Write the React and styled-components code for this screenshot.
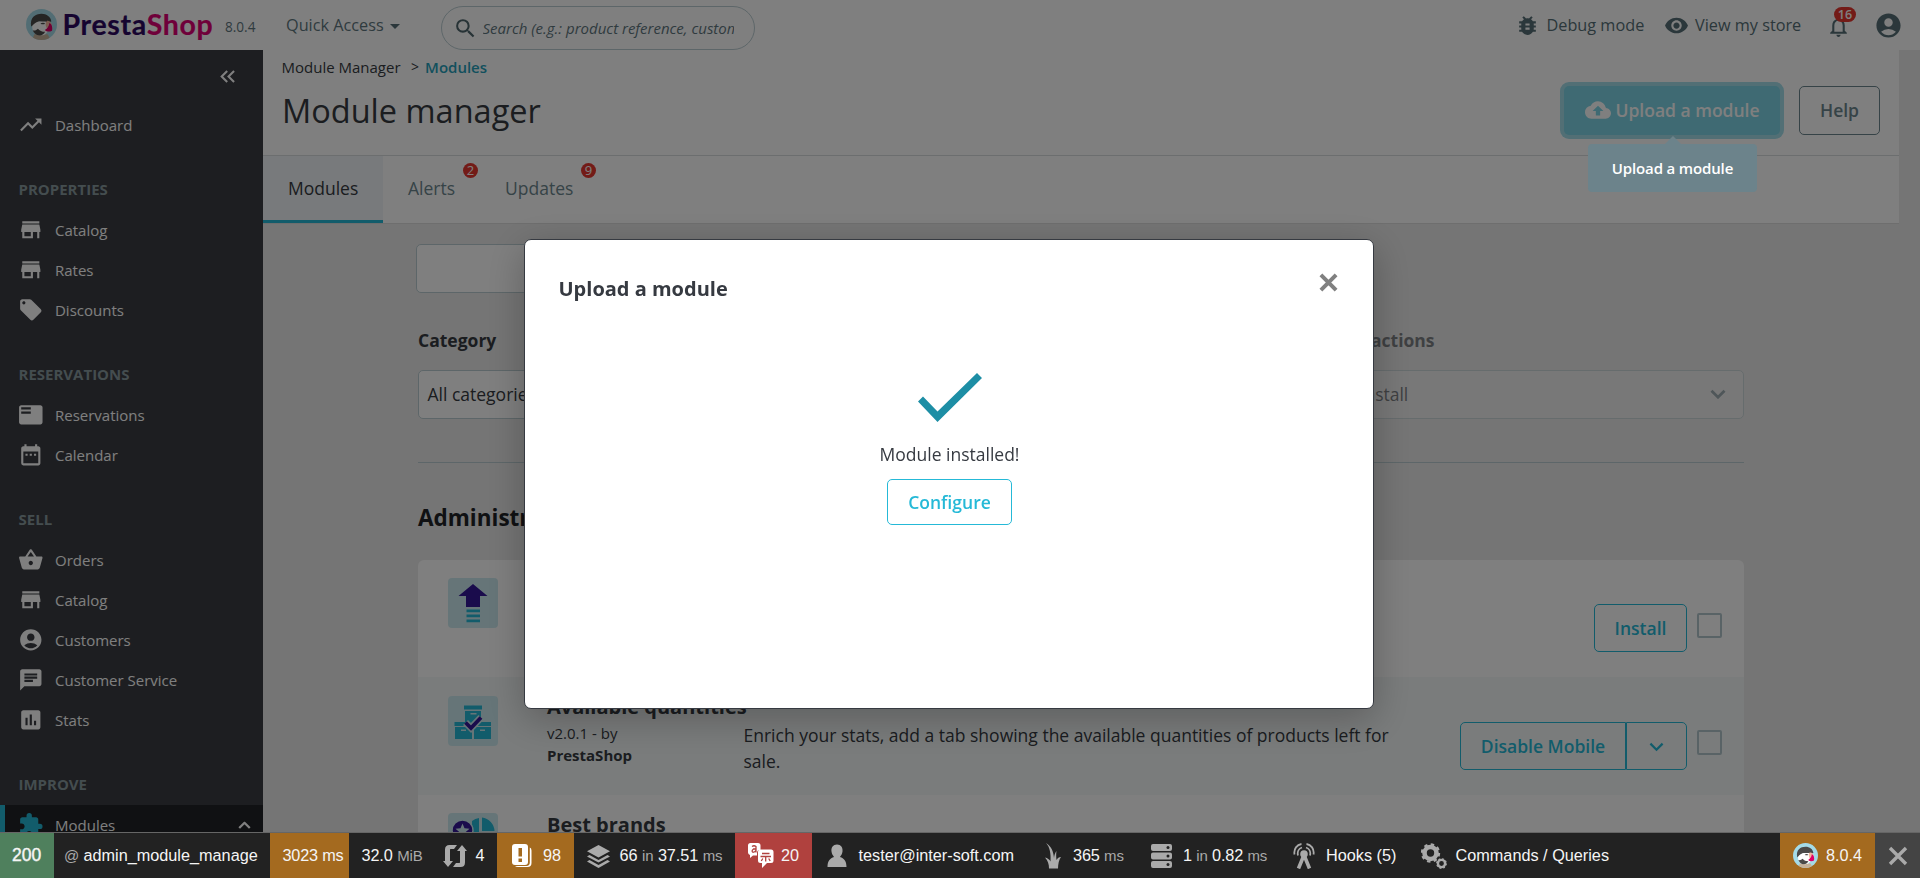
import React from "react";
import styled, { createGlobalStyle, css } from "styled-components";
import {
  MdTrendingUp, MdStore, MdLocalOffer, MdFeaturedPlayList, MdDateRange, MdShoppingBasket,
  MdAccountCircle, MdChat, MdAssessment, MdExtension,
  MdCloudUpload, MdBugReport, MdRemoveRedEye, MdNotificationsNone, MdSearch, MdKeyboardDoubleArrowLeft,
} from "react-icons/md";

const Global = createGlobalStyle`
  *, *::before, *::after { box-sizing: border-box; }
  html, body { margin: 0; height: 100%; overflow: hidden; }
  body { background: #eaeaea; font-family: "Open Sans", "Noto Sans", sans-serif; color: #363a41; font-size: 17.5px; }
  svg { display: block; flex: none; }
  button { font-family: inherit; margin: 0; }
`;

const Screen = styled.div`
  display: flex;
  flex-direction: column;
  width: 1920px;
  height: 878px;
  overflow: hidden;
`;

/* ---------- top bar ---------- */
const TopBar = styled.header`
  flex: none;
  display: flex;
  align-items: flex-start;
  height: 50px;
  padding-left: 26px;
  background: #fff;
  color: #5f777f;
`;
const Brand = styled.div`
  display: flex;
  align-items: center;
  width: 199px;
  height: 49px;
`;
const BrandName = styled.span`
  margin: -2px 0 0 5.5px;
  font: 700 28.5px/32px Lato, sans-serif;
  letter-spacing: 0.65px;
  color: #2c0860;
  -webkit-text-stroke: 0.2px currentColor;
  span { color: #df0074; }
`;
const Version = styled.span`
  width: 61px;
  padding-top: 17px;
  font-size: 13.6px;
  line-height: 20px;
`;
const QuickAccess = styled.div`
  display: flex;
  align-items: center;
  width: 155px;
  padding-top: 13px;
  font-size: 16.25px;
  line-height: 24px;
  &::after {
    content: "";
    margin: 3px 0 0 6px;
    border: 5px solid transparent;
    border-top-color: #566f76;
    border-bottom: 0;
  }
`;
const SearchBox = styled.div`
  display: flex;
  align-items: center;
  width: 314px;
  height: 44px;
  margin-top: 6px;
  padding: 0 20px 0 11px;
  border: 1px solid #bbcdd2;
  border-radius: 22px;
  svg { color: #4f666d; margin-right: 4.5px; }
`;
const Placeholder = styled.span`
  width: 251px;
  overflow: hidden;
  white-space: nowrap;
  font-size: 15px;
  font-style: italic;
`;
const TopActions = styled.div`
  display: flex;
  align-items: center;
  height: 50px;
  margin-left: auto;
  color: #566f76;
  font-size: 16.25px;
`;
const TopLink = styled.span`
  display: flex;
  align-items: center;
  gap: ${(p) => p.$gap}px;
  width: ${(p) => p.$w}px;
  white-space: nowrap;
`;
const Bell = styled.span`
  position: relative;
  width: 47.5px;
  padding-top: 2px;
`;
const BellBadge = styled.span`
  position: absolute;
  left: 8px;
  top: -5px;
  width: 22px;
  height: 15px;
  border-radius: 8px;
  background: #e6372f;
  color: #fff;
  font-size: 12.5px;
  font-weight: 600;
  line-height: 15px;
  text-align: center;
`;

/* ---------- sidebar ---------- */
const Body = styled.div`
  flex: 1;
  display: flex;
  min-height: 0;
`;
const Sidebar = styled.nav`
  flex: none;
  width: 263px;
  background: #3a3c42;
  color: #fff;
  overflow: hidden;
`;
const Collapse = styled.div`
  display: flex;
  justify-content: flex-end;
  align-items: center;
  height: 55px;
  padding: 0 23px 3px 0;
`;
const NavTitle = styled.div`
  height: 65px;
  padding: 31.5px 0 0 18.5px;
  font-size: 15px;
  font-weight: 700;
  line-height: 24px;
  color: #889a9f;
`;
const NavItem = styled.a`
  display: flex;
  align-items: center;
  height: 40px;
  padding: 0 12px 0 ${(p) => (p.$active ? 13 : 18)}px;
  font-size: 15px;
  span { flex: 1; margin-left: 11.4px; }
  ${(p) => p.$active && css`
    background: #202226;
    border-left: 5px solid #25b9d7;
    svg:first-child { color: #25b9d7; }
    svg:last-child { transform: rotate(180deg); }
  `}
`;

/* ---------- page header ---------- */
const Main = styled.main`
  flex: 1;
  min-width: 0;
  overflow: hidden;
`;
const PageHead = styled.div`
  width: 1636px;
  height: 174px;
  background: #fff;
  border-bottom: 1px solid #dcdcdc;
`;
const HeadTop = styled.div`
  display: flex;
  justify-content: space-between;
  height: 106px;
  padding: 0 19px;
  border-bottom: 1px solid #d8dcde;
`;
const Crumbs = styled.div`
  display: flex;
  margin-left: -0.5px;
  padding-top: 6px;
  font-size: 15px;
  line-height: 22px;
  b { font-weight: 600; color: #25a0ba; }
  i { margin: 0 6px 0 10.5px; font-style: normal; font-size: 14px; }
`;
const Title = styled.h1`
  margin: 9px 0 0;
  font-size: 32.5px;
  line-height: 48px;
  font-weight: 400;
`;
const HeadButtons = styled.div`
  display: flex;
  gap: 19px;
  padding-top: 36px;
`;
const Button = styled.button`
  display: flex;
  align-items: center;
  justify-content: center;
  gap: 4px;
  width: ${(p) => p.$w}px;
  height: ${(p) => p.$h || 48}px;
  padding: 0;
  border: 1px solid ${(p) => p.$color || "#25b9d7"};
  border-radius: 5px;
  background: transparent;
  color: ${(p) => p.$color || "#25b9d7"};
  font-size: 17.5px;
  font-weight: 600;
  white-space: nowrap;
`;
const PrimaryButton = styled(Button)`
  padding: 0 0 1px 1px;
  border: 0;
  background: #7ed5e6;
  color: #fff;
  box-shadow: 0 0 0 4px #a5dfeb;
`;
const HelpButton = styled(Button)`
  padding-bottom: 1px;
`;
const Tabs = styled.div`
  display: flex;
  height: 67px;
`;
const Tab = styled.div`
  position: relative;
  width: ${(p) => p.$w}px;
  padding: 0 25px;
  line-height: 65px;
  color: ${(p) => (p.$active ? "#363a41" : "#6c868e")};
  ${(p) => p.$active && css`
    background: #f0f4f8;
    box-shadow: inset 0 -3px 0 #25b9d7;
  `}
`;
const TabBadge = styled.span`
  position: absolute;
  right: 2px;
  top: 7px;
  width: 15px;
  height: 15px;
  border-radius: 50%;
  background: #e6372f;
  color: #fff;
  font-size: 13px;
  line-height: 15px;
  text-align: center;
`;

/* ---------- module list ---------- */
const Content = styled.div`
  width: 1328px;
  margin-left: 153px;
  padding: 20px 0 0 2px;
`;
const ModuleSearch = styled.div`
  width: 800px;
  height: 49px;
  margin-left: -2px;
  background: #fff;
  border: 1px solid #bbcdd2;
  border-radius: 5px;
`;
const Filters = styled.div`
  display: grid;
  grid-template-columns: repeat(3, 417px);
  justify-content: space-between;
  margin-top: 34px;
  padding-bottom: 43px;
  border-bottom: 1px solid #bbcdd2;
`;
const Filter = styled.div`
  opacity: ${(p) => (p.$disabled ? 0.6 : 1)};
`;
const FilterLabel = styled.div`
  line-height: 26px;
  font-weight: 700;
`;
const Select = styled.div`
  display: flex;
  align-items: center;
  justify-content: space-between;
  height: 49px;
  margin-top: 17px;
  padding: 0 17px 1px 8.5px;
  background: #fff;
  border: 1px solid #bbcdd2;
  border-radius: 5px;
  svg { color: #6c868e; }
  ${Filter}:last-child & { background: #f6f6f6; }
`;
const GroupTitle = styled.h2`
  margin: 38px 0 0;
  height: 59px;
  font-size: 22.5px;
  font-weight: 700;
  line-height: 34px;
  color: #202226;
`;
const List = styled.div`
  width: 1326px;
  border-radius: 6px 6px 0 0;
  overflow: hidden;
`;
const Row = styled.div`
  display: flex;
  height: ${(p) => p.$h}px;
  padding: 0 22px 0 30px;
  background: ${(p) => (p.$alt ? "#f5f9f9" : "#fff")};
`;
const Thumb = styled.div`
  width: 50px;
  height: 50px;
  margin-top: ${(p) => p.$top || 18}px;
  border-radius: 4px;
  overflow: hidden;
  background: #cdebf0;
`;
const RowText = styled.div`
  display: grid;
  grid-template-columns: 196.5px 679.5px;
  align-content: start;
  width: 876px;
  margin-left: 49px;
  padding-top: 16px;
`;
const ModuleName = styled.div`
  grid-column: 1 / -1;
  height: 28px;
  font-size: 20px;
  font-weight: 700;
  line-height: 28px;
`;
const Meta = styled.div`
  font-size: 15px;
  line-height: 22px;
  padding-top: 1px;
  b { display: block; font-weight: 700; }
`;
const Description = styled.div`
  padding-top: 1px;
  font-size: 17.5px;
  line-height: 26px;
`;
const RowActions = styled.div`
  display: flex;
  justify-content: flex-end;
  flex: 1;
  padding-top: ${(p) => p.$top}px;
  gap: 10px;
`;
const Split = styled.div`
  display: flex;
  button:first-child { border-radius: 5px 0 0 5px; }
  button:last-child { border-radius: 0 5px 5px 0; padding-top: 2px; }
`;
const Checkbox = styled.span`
  width: 25px;
  height: 25px;
  margin-top: ${(p) => p.$top || 8}px;
  border: 2px solid #b3c7cd;
  border-radius: 2px;
`;

/* ---------- overlay ---------- */
const Backdrop = styled.div`
  position: fixed;
  inset: 0;
  display: flex;
  justify-content: center;
  align-items: flex-start;
  padding: 239px 22px 0 0;
  background: rgba(0, 0, 0, 0.5);
`;
const Dialog = styled.div`
  width: 850px;
  height: 470px;
  background: #fff;
  border: 1px solid #363a41;
  border-radius: 7px;
  box-shadow: 0 10px 38px rgba(0, 0, 0, 0.25);
`;
const DialogHead = styled.div`
  display: flex;
  justify-content: space-between;
  height: 133px;
  padding: 34px 35.5px 0 33.5px;
  font-size: 20px;
  font-weight: 700;
  line-height: 30px;
  svg { margin-top: -1px; }
`;
const DialogBody = styled.div`
  display: flex;
  flex-direction: column;
  align-items: center;
  padding-left: 1px;
  svg { margin-left: 1px; }
  span { margin: 18px 0 12px; line-height: 26px; }
`;
const Tooltip = styled.div`
  position: fixed;
  left: 1588px;
  top: 144px;
  width: 169px;
  height: 48px;
  border-radius: 4px;
  background: #6c838b;
  color: #fff;
  font-size: 15px;
  font-weight: 600;
  letter-spacing: -0.15px;
  line-height: 48px;
  text-align: center;
  &::before {
    content: "";
    position: absolute;
    left: 77px;
    top: -8px;
    border: 8px solid transparent;
    border-top: 0;
    border-bottom-color: #6c838b;
  }
`;

/* ---------- debug toolbar ---------- */
const DebugBar = styled.footer`
  position: fixed;
  left: 0;
  right: 0;
  bottom: 0;
  display: flex;
  height: 46px;
  border-top: 1px solid #666;
  background: #222;
  color: #f5f5f5;
  font: 16.25px/45px "Liberation Sans", Arial, sans-serif;
`;
const DebugItem = styled.div`
  display: flex;
  align-items: center;
  width: ${(p) => p.$w}px;
  padding-left: ${(p) => p.$pl}px;
  background: ${(p) => p.$bg || "transparent"};
  white-space: pre;
  svg { color: ${(p) => (p.$bg ? "#fff" : "#aaa")}; }
  small { font-size: 15px; color: #aaa; }
`;
const DebugText = styled.span`
  margin-left: ${(p) => p.$ml || 0}px;
  letter-spacing: ${(p) => p.$ls || 0}px;
`;
const StatusCode = styled.span`
  font-size: 17.5px;
  -webkit-text-stroke: 0.4px currentColor;
`;
const Spacer = styled.div`
  flex: 1;
`;

/* ---------- drawings ---------- */
const Puffin = ({ size }) => (
  <svg width={size} height={size} viewBox="0 0 30 30">
    <defs><clipPath id={"pf" + size}><circle cx="15" cy="15" r="15" /></clipPath></defs>
    <g clipPath={`url(#pf${size})`}>
      <rect width="30" height="30" fill="#a4dbe8" />
      <path d="M6 30 8 24.500h13l3 5.500z" fill="#c6b29b" />
      <path d="M5 17C3.500 8 9 4.500 15 4.500c5 0 9 3 9.500 7.500l-4 1-8-1z" fill="#4b4a49" />
      <path d="M6 17c1-3 4.500-5 8-5h5c2 1 3 4 2.500 8-1 4-4 5.500-7.500 5.500C9 25.500 6 22 6 17z" fill="#fff" />
      <path d="M6.500 20.500c2 .5 3.500 0 5-1.500 1.500 2 4 3 7 3-1.500 3-4 4-6.500 3.500-2.500-.5-4.700-2.500-5.500-5z" fill="#4b4a49" />
      <path d="M14 14c1.500-1 3.500-1 4.500 0-1 1-3.200 1.200-4.500 0z" fill="#4b4a49" />
      <path d="M20 11.500c2.500-.5 4 1 5 4l-5 3c-1.200-2.500-1.500-5 0-7z" fill="#f5b8a0" />
      <path d="M22.500 13.500c2.300.8 3.500 4 2.700 7.500-2.700 1.300-5.200 1-7-.7 2.500-1.600 4.300-3.800 4.300-6.800z" fill="#df0067" />
    </g>
  </svg>
);
const Chevron = ({ w, stroke }) => (
  <svg width={w} height={w * 0.65} viewBox="0 0 16 10" fill="none" stroke="currentColor" strokeWidth={stroke}>
    <path d="m1.500 1.500 6.500 6.500 6.500-6.500" />
  </svg>
);
const UpgradeArt = () => (
  <svg width="50" height="50" viewBox="0 0 50 50">
    <path d="M25 6 39.500 18H32v11H18V18h-7.500z" fill="#351898" />
    <path d="M18.500 31.500h13.500v2.700H18.500zm0 5h13.500v2.700H18.500zm0 5h13.500v2.700H18.500z" fill="#25b9d7" />
  </svg>
);
const StockArt = () => (
  <svg width="50" height="50" viewBox="0 0 50 50">
    <path d="M16 9.500h18v4H16zM17 15h16v12H17zM6.500 26H24v4H6.500zM26 26h17v4H26zM7 31h17v12H7zM26 31h17v12H26z" fill="#25b9d7" />
    <path d="M22.500 17h6v1.600h-6zM13 33.500h5v1.600h-5zM32 33.500h5v1.600h-5z" fill="#cdebf0" />
    <path d="m17.500 26.500 5.500 5.500 10-10.500" fill="none" stroke="#cdebf0" strokeWidth="7" />
    <path d="m17.500 26.500 5.500 5.500 10-10.500" fill="none" stroke="#351898" strokeWidth="3.800" />
  </svg>
);
const BrandsArt = () => (
  <svg width="50" height="50" viewBox="0 0 50 50">
    <path d="M31 5a16 16 0 0 0-7 3v11h7zM34 4.500V18h12.500A14 14 0 0 0 34 4.500z" fill="#25b9d7" />
    <path d="M34 19.500h12.500l-4 6z" fill="#351898" />
    <circle cx="14.500" cy="17.500" r="10.500" fill="#351898" stroke="#cdebf0" strokeWidth="1.500" />
    <path d="m14.500 10.500 2 4.800 5 .4-3.800 3.400 1.200 5-4.400-2.700-4.400 2.700 1.200-5-3.800-3.400 5-.4z" fill="#cdebf0" />
  </svg>
);
const CloseIcon = ({ size, w, color }) => (
  <svg width={size} height={size} viewBox="0 0 20 20" fill="none" stroke={color} strokeWidth={w}>
    <path d="m2 2 16 16M18 2 2 18" />
  </svg>
);
const CheckArt = () => (
  <svg width="66" height="50" viewBox="0 0 66 50">
    <path d="M1 28.500 6 23.500 20.500 38.500 60 0l5 5L20.500 49z" fill="#1d8ea5" />
  </svg>
);
const AjaxIcon = () => (
  <svg width="24" height="24" viewBox="0 0 24 24" fill="currentColor">
    <path d="M2 17V5.500Q2 1 6.500 1H14l-3 4H7.500Q7 5 7 6v11h3l-5 6-5-6zM22 7v11.500q0 4.500-4.500 4.500H10l3-4h3.500q.5 0 .5-1V7h-3l5-6 5 6z" />
  </svg>
);
const LogIcon = () => (
  <svg width="20" height="24" viewBox="0 0 20 24">
    <path d="M3 0h10q3 0 3 3v15q0 3-3 3H3q-3 0-3-3V3q0-3 3-3z" fill="currentColor" />
    <path d="M17.800 3.500q1.700.5 1.700 3V19q0 4-4 4H6q-2 0-3-1h11.500q3.300-.3 3.300-3.500z" fill="currentColor" />
    <path d="M6.500 4h3.500v8.500H6.500zM6.500 14.500h3.500V18H6.500z" fill="#a46a1f" />
  </svg>
);
const LayersIcon = () => (
  <svg width="23" height="24" viewBox="0 0 23 24" fill="currentColor">
    <path d="M11.500 1 23 7.200 11.500 13.400 0 7.200zM2.500 11l9 5 9-5 2.500 1.400-11.500 6.200L0 12.400zM2.500 16l9 5 9-5 2.500 1.400L11.500 24 0 17.400z" />
  </svg>
);
const TranslateIcon = () => (
  <svg width="26" height="26" viewBox="0 0 26 26">
    <path d="M2.500 0H10q2.500 0 2.500 2.500V7H12q-3 0-3 3v2.500H5L2 15v-3Q0 11 0 9.500v-7Q0 0 2.500 0z" fill="currentColor" />
    <path d="M12.500 6.500H23q2.500 0 2.500 2.500v8.500q0 2.500-2.500 2.500h-4l-5 5v-5h-1.500q-2.500 0-2.500-2.500V9q0-2.500 2.500-2.500z" fill="currentColor" />
    <g fill="none" stroke="#b0413e" strokeWidth="1.300">
      <path d="M4 3.500q2-1.500 4 0v6M8 6H5.500Q3 8 5 9.300q2 0 3-2M14 10.500h7.500M12.500 13.500h10.500M17.700 13.500v5M14.800 15.500l-1.500 2.500M20.700 15.500l1.500 2.500" />
    </g>
  </svg>
);
const UserIcon = () => (
  <svg width="20" height="24" viewBox="0 0 20 24" fill="currentColor">
    <path d="M10 .5c4 0 6 3 5.500 7-.3 2.500-1.500 4-2.500 5.500 4 1.500 6.500 4 6.500 10H.5c0-6 2.500-8.500 6.500-10-1-1.500-2.200-3-2.500-5.500C4 3.500 6 .5 10 .5z" />
  </svg>
);
const TwigIcon = () => (
  <svg width="16" height="26" viewBox="0 0 16 26" fill="currentColor">
    <path d="M1 0c5 3 7.500 8 8 15 .3-3 1-5 2.500-7-.5 3-.3 6 0 9 1-2 2.500-3 4.500-3-2 2.500-3 7-3 11.500H4c0-4-1-8-4-11 2.500.5 4.500 2 5.500 4C6 11 5 4 1 0z" />
  </svg>
);
const DbIcon = () => (
  <svg width="21" height="24" viewBox="0 0 21 24">
    <path d="M2 0h17q2 0 2 2v3q0 2-2 2H2Q0 7 0 5V2q0-2 2-2zM2 8.500h17q2 0 2 2v3q0 2-2 2H2q-2 0-2-2v-3q0-2 2-2zM2 17h17q2 0 2 2v3q0 2-2 2H2q-2 0-2-2v-3q0-2 2-2z" fill="currentColor" />
    <g fill="#222"><circle cx="17" cy="3.500" r="1.500" /><circle cx="17" cy="12" r="1.500" /><circle cx="17" cy="20.500" r="1.500" /></g>
  </svg>
);
const HooksIcon = () => (
  <svg width="22" height="26" viewBox="0 0 22 26" fill="none" stroke="currentColor">
    <circle cx="11" cy="11" r="3.800" fill="currentColor" stroke="none" />
    <path d="M11 12 5.500 25.500M11 12l5.500 13.500" strokeWidth="3.600" />
    <path d="M5 12.500C4 8.500 6 5.500 9 4.500M17 12.500c1-4-1-7-4-8M1.500 11.500C.5 6 4 1.500 8.500 1M20.500 11.500c1-5.500-2.500-10-7-10.500" strokeWidth="1.800" />
  </svg>
);
const GearsIcon = () => (
  <svg width="26" height="26" viewBox="0 0 26 26" fill="none" stroke="currentColor">
    <circle cx="9.500" cy="10" r="6" strokeWidth="4.600" />
    <circle cx="9.500" cy="10" r="8.600" strokeWidth="2.200" strokeDasharray="3.400 3.350" />
    <circle cx="20.500" cy="20.500" r="3.600" strokeWidth="2.400" />
    <circle cx="20.500" cy="20.500" r="4.800" strokeWidth="1.200" strokeDasharray="1.900 1.870" />
  </svg>
);

/* ---------- data ---------- */
const NAV = [
  { title: "PROPERTIES", items: [["Catalog", MdStore], ["Rates", MdStore], ["Discounts", MdLocalOffer]] },
  { title: "RESERVATIONS", items: [["Reservations", MdFeaturedPlayList], ["Calendar", MdDateRange]] },
  {
    title: "SELL",
    items: [["Orders", MdShoppingBasket], ["Catalog", MdStore], ["Customers", MdAccountCircle],
      ["Customer Service", MdChat], ["Stats", MdAssessment]],
  },
];

export default function App() {
  return (
    <>
      <Global />
      <Screen>
        <TopBar>
          <Brand>
            <Puffin size={31} />
            <BrandName>Presta<span>Shop</span></BrandName>
          </Brand>
          <Version>8.0.4</Version>
          <QuickAccess>Quick Access</QuickAccess>
          <SearchBox>
            <MdSearch size={25} />
            <Placeholder>Search (e.g.: product reference, custom</Placeholder>
          </SearchBox>
          <TopActions>
            <TopLink $w={149.5} $gap={7}><MdBugReport size={25} />Debug mode</TopLink>
            <TopLink $w={162} $gap={6}><MdRemoveRedEye size={25} />View my store</TopLink>
            <Bell><MdNotificationsNone size={25} /><BellBadge>16</BellBadge></Bell>
            <TopLink $w={46.5} $gap={0}><MdAccountCircle size={29} /></TopLink>
          </TopActions>
        </TopBar>
        <Body>
          <Sidebar>
            <Collapse><MdKeyboardDoubleArrowLeft size={25} /></Collapse>
            <NavItem><MdTrendingUp size={25.6} /><span>Dashboard</span></NavItem>
            {NAV.map((group) => (
              <React.Fragment key={group.title}>
                <NavTitle>{group.title}</NavTitle>
                {group.items.map(([label, Icon]) => (
                  <NavItem key={label}><Icon size={25.6} /><span>{label}</span></NavItem>
                ))}
              </React.Fragment>
            ))}
            <NavTitle>IMPROVE</NavTitle>
            <NavItem $active><MdExtension size={25.6} /><span>Modules</span><Chevron w={13} stroke={2.8} /></NavItem>
          </Sidebar>
          <Main>
            <PageHead>
              <HeadTop>
                <div>
                  <Crumbs>Module Manager<i>&gt;</i><b>Modules</b></Crumbs>
                  <Title>Module manager</Title>
                </div>
                <HeadButtons>
                  <PrimaryButton $w={216} $h={49}><MdCloudUpload size={26} />Upload a module</PrimaryButton>
                  <HelpButton $w={81} $h={49} $color="#6c868e">Help</HelpButton>
                </HeadButtons>
              </HeadTop>
              <Tabs>
                <Tab $w={120} $active>Modules</Tab>
                <Tab $w={97}>Alerts<TabBadge>2</TabBadge></Tab>
                <Tab $w={118}>Updates<TabBadge>9</TabBadge></Tab>
              </Tabs>
            </PageHead>
            <Content>
              <ModuleSearch />
              <Filters>
                <Filter><FilterLabel>Category</FilterLabel><Select>All categories<Chevron w={16} stroke={2.8} /></Select></Filter>
                <Filter><FilterLabel>Status</FilterLabel><Select>Show all modules<Chevron w={16} stroke={2.8} /></Select></Filter>
                <Filter $disabled><FilterLabel>Bulk actions</FilterLabel><Select>Uninstall<Chevron w={16} stroke={2.8} /></Select></Filter>
              </Filters>
              <GroupTitle>Administration</GroupTitle>
              <List>
                <Row $h={117}>
                  <Thumb><UpgradeArt /></Thumb>
                  <RowText />
                  <RowActions $top={44}><Button $w={93}>Install</Button><Checkbox $top={9} /></RowActions>
                </Row>
                <Row $h={118} $alt>
                  <Thumb $top={19}><StockArt /></Thumb>
                  <RowText>
                    <ModuleName>Available quantities</ModuleName>
                    <Meta>v2.0.1 - by<b>PrestaShop</b></Meta>
                    <Description>Enrich your stats, add a tab showing the available quantities of products left for sale.</Description>
                  </RowText>
                  <RowActions $top={45}>
                    <Split><Button $w={166}>Disable Mobile</Button><Button $w={61}><Chevron w={15} stroke={2.4} /></Button></Split>
                    <Checkbox />
                  </RowActions>
                </Row>
                <Row $h={118}>
                  <Thumb><BrandsArt /></Thumb>
                  <RowText><ModuleName>Best brands</ModuleName></RowText>
                </Row>
              </List>
            </Content>
          </Main>
        </Body>
      </Screen>
      <Backdrop>
        <Dialog>
          <DialogHead>Upload a module<CloseIcon size={19} w={4.2} color="#808080" /></DialogHead>
          <DialogBody>
            <CheckArt />
            <span>Module installed!</span>
            <Button $w={125} $h={46}>Configure</Button>
          </DialogBody>
        </Dialog>
      </Backdrop>
      <Tooltip>Upload a module</Tooltip>
      <DebugBar>
        <DebugItem $w={54} $pl={12} $bg="#4f805d"><StatusCode>200</StatusCode></DebugItem>
        <DebugItem $w={216} $pl={10}><small>@ </small><DebugText>admin_module_manage</DebugText></DebugItem>
        <DebugItem $w={79} $pl={12.5} $bg="#a46a1f"><DebugText $ls={-0.2}>3023 ms</DebugText></DebugItem>
        <DebugItem $w={83} $pl={12.5}><DebugText $ls={-0.1}>32.0 <small>MiB</small></DebugText></DebugItem>
        <DebugItem $w={65} $pl={11}><AjaxIcon /><DebugText $ml={8.5}>4</DebugText></DebugItem>
        <DebugItem $w={77} $pl={15} $bg="#a46a1f"><LogIcon /><DebugText $ml={11}>98</DebugText></DebugItem>
        <DebugItem $w={161} $pl={13}><LayersIcon /><DebugText $ml={9.5} $ls={-0.07}>66 <small>in</small> 37.51 <small>ms</small></DebugText></DebugItem>
        <DebugItem $w={77} $pl={13} $bg="#b0413e"><TranslateIcon /><DebugText $ml={7}>20</DebugText></DebugItem>
        <DebugItem $w={218} $pl={15}><UserIcon /><DebugText $ml={11.5}>tester@inter-soft.com</DebugText></DebugItem>
        <DebugItem $w={108} $pl={15}><TwigIcon /><DebugText $ml={12} $ls={-0.15}>365 <small>ms</small></DebugText></DebugItem>
        <DebugItem $w={144} $pl={13}><DbIcon /><DebugText $ml={11} $ls={-0.15}>1 <small>in</small> 0.82 <small>ms</small></DebugText></DebugItem>
        <DebugItem $w={128} $pl={11}><HooksIcon /><DebugText $ml={11}>Hooks (5)</DebugText></DebugItem>
        <DebugItem $w={210} $pl={10.500}><GearsIcon /><DebugText $ml={9}>Commands / Queries</DebugText></DebugItem>
        <Spacer />
        <DebugItem $w={95} $pl={13} $bg="#a46a1f"><Puffin size={25} /><DebugText $ml={8}>8.0.4</DebugText></DebugItem>
        <DebugItem $w={45} $pl={12.5} $bg="#444"><CloseIcon size={20} w={3.4} color="#aaa" /></DebugItem>
      </DebugBar>
    </>
  );
}
